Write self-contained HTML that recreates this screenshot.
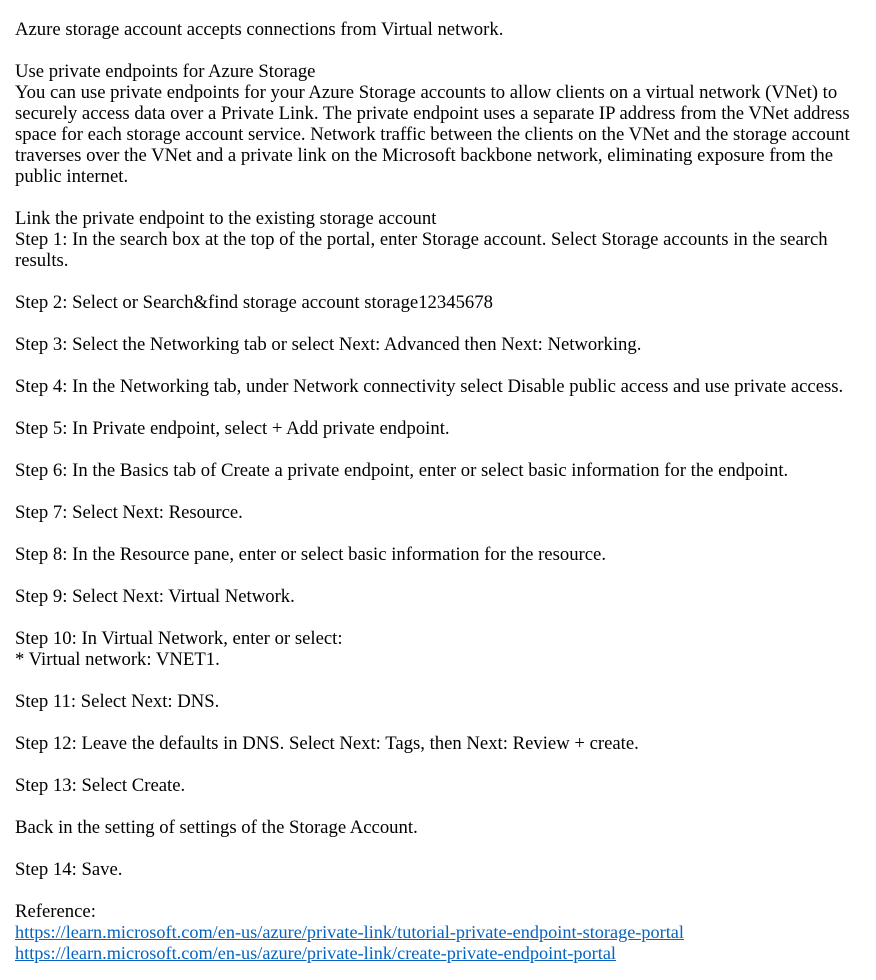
<!DOCTYPE html>
<html><head><meta charset="utf-8"><style>
html,body{margin:0;padding:0;background:#fff;}
body{width:876px;height:980px;overflow:hidden;}
#c{position:absolute;left:15px;top:19px;font-family:"Liberation Serif",serif;font-size:18.7px;line-height:21px;color:#000;white-space:nowrap;}
a{color:#0563c1;text-decoration:underline;font-size:18.25px;}
</style></head><body><div id="c">
Azure storage account accepts connections from Virtual network.<br>
<br>
Use private endpoints for Azure Storage<br>
You can use private endpoints for your Azure Storage accounts to allow clients on a virtual network (VNet) to<br>
securely access data over a Private Link. The private endpoint uses a separate IP address from the VNet address<br>
space for each storage account service. Network traffic between the clients on the VNet and the storage account<br>
traverses over the VNet and a private link on the Microsoft backbone network, eliminating exposure from the<br>
public internet.<br>
<br>
Link the private endpoint to the existing storage account<br>
Step 1: In the search box at the top of the portal, enter Storage account. Select Storage accounts in the search<br>
results.<br>
<br>
Step 2: Select or Search&amp;find storage account storage12345678<br>
<br>
Step 3: Select the Networking tab or select Next: Advanced then Next: Networking.<br>
<br>
Step 4: In the Networking tab, under Network connectivity select Disable public access and use private access.<br>
<br>
Step 5: In Private endpoint, select + Add private endpoint.<br>
<br>
Step 6: In the Basics tab of Create a private endpoint, enter or select basic information for the endpoint.<br>
<br>
Step 7: Select Next: Resource.<br>
<br>
Step 8: In the Resource pane, enter or select basic information for the resource.<br>
<br>
Step 9: Select Next: Virtual Network.<br>
<br>
Step 10: In Virtual Network, enter or select:<br>
* Virtual network: VNET1.<br>
<br>
Step 11: Select Next: DNS.<br>
<br>
Step 12: Leave the defaults in DNS. Select Next: Tags, then Next: Review + create.<br>
<br>
Step 13: Select Create.<br>
<br>
Back in the setting of settings of the Storage Account.<br>
<br>
Step 14: Save.<br>
<br>
Reference:<br>
<a>https://learn.microsoft.com/en-us/azure/private-link/tutorial-private-endpoint-storage-portal</a><br>
<a>https://learn.microsoft.com/en-us/azure/private-link/create-private-endpoint-portal</a>
</div></body></html>
